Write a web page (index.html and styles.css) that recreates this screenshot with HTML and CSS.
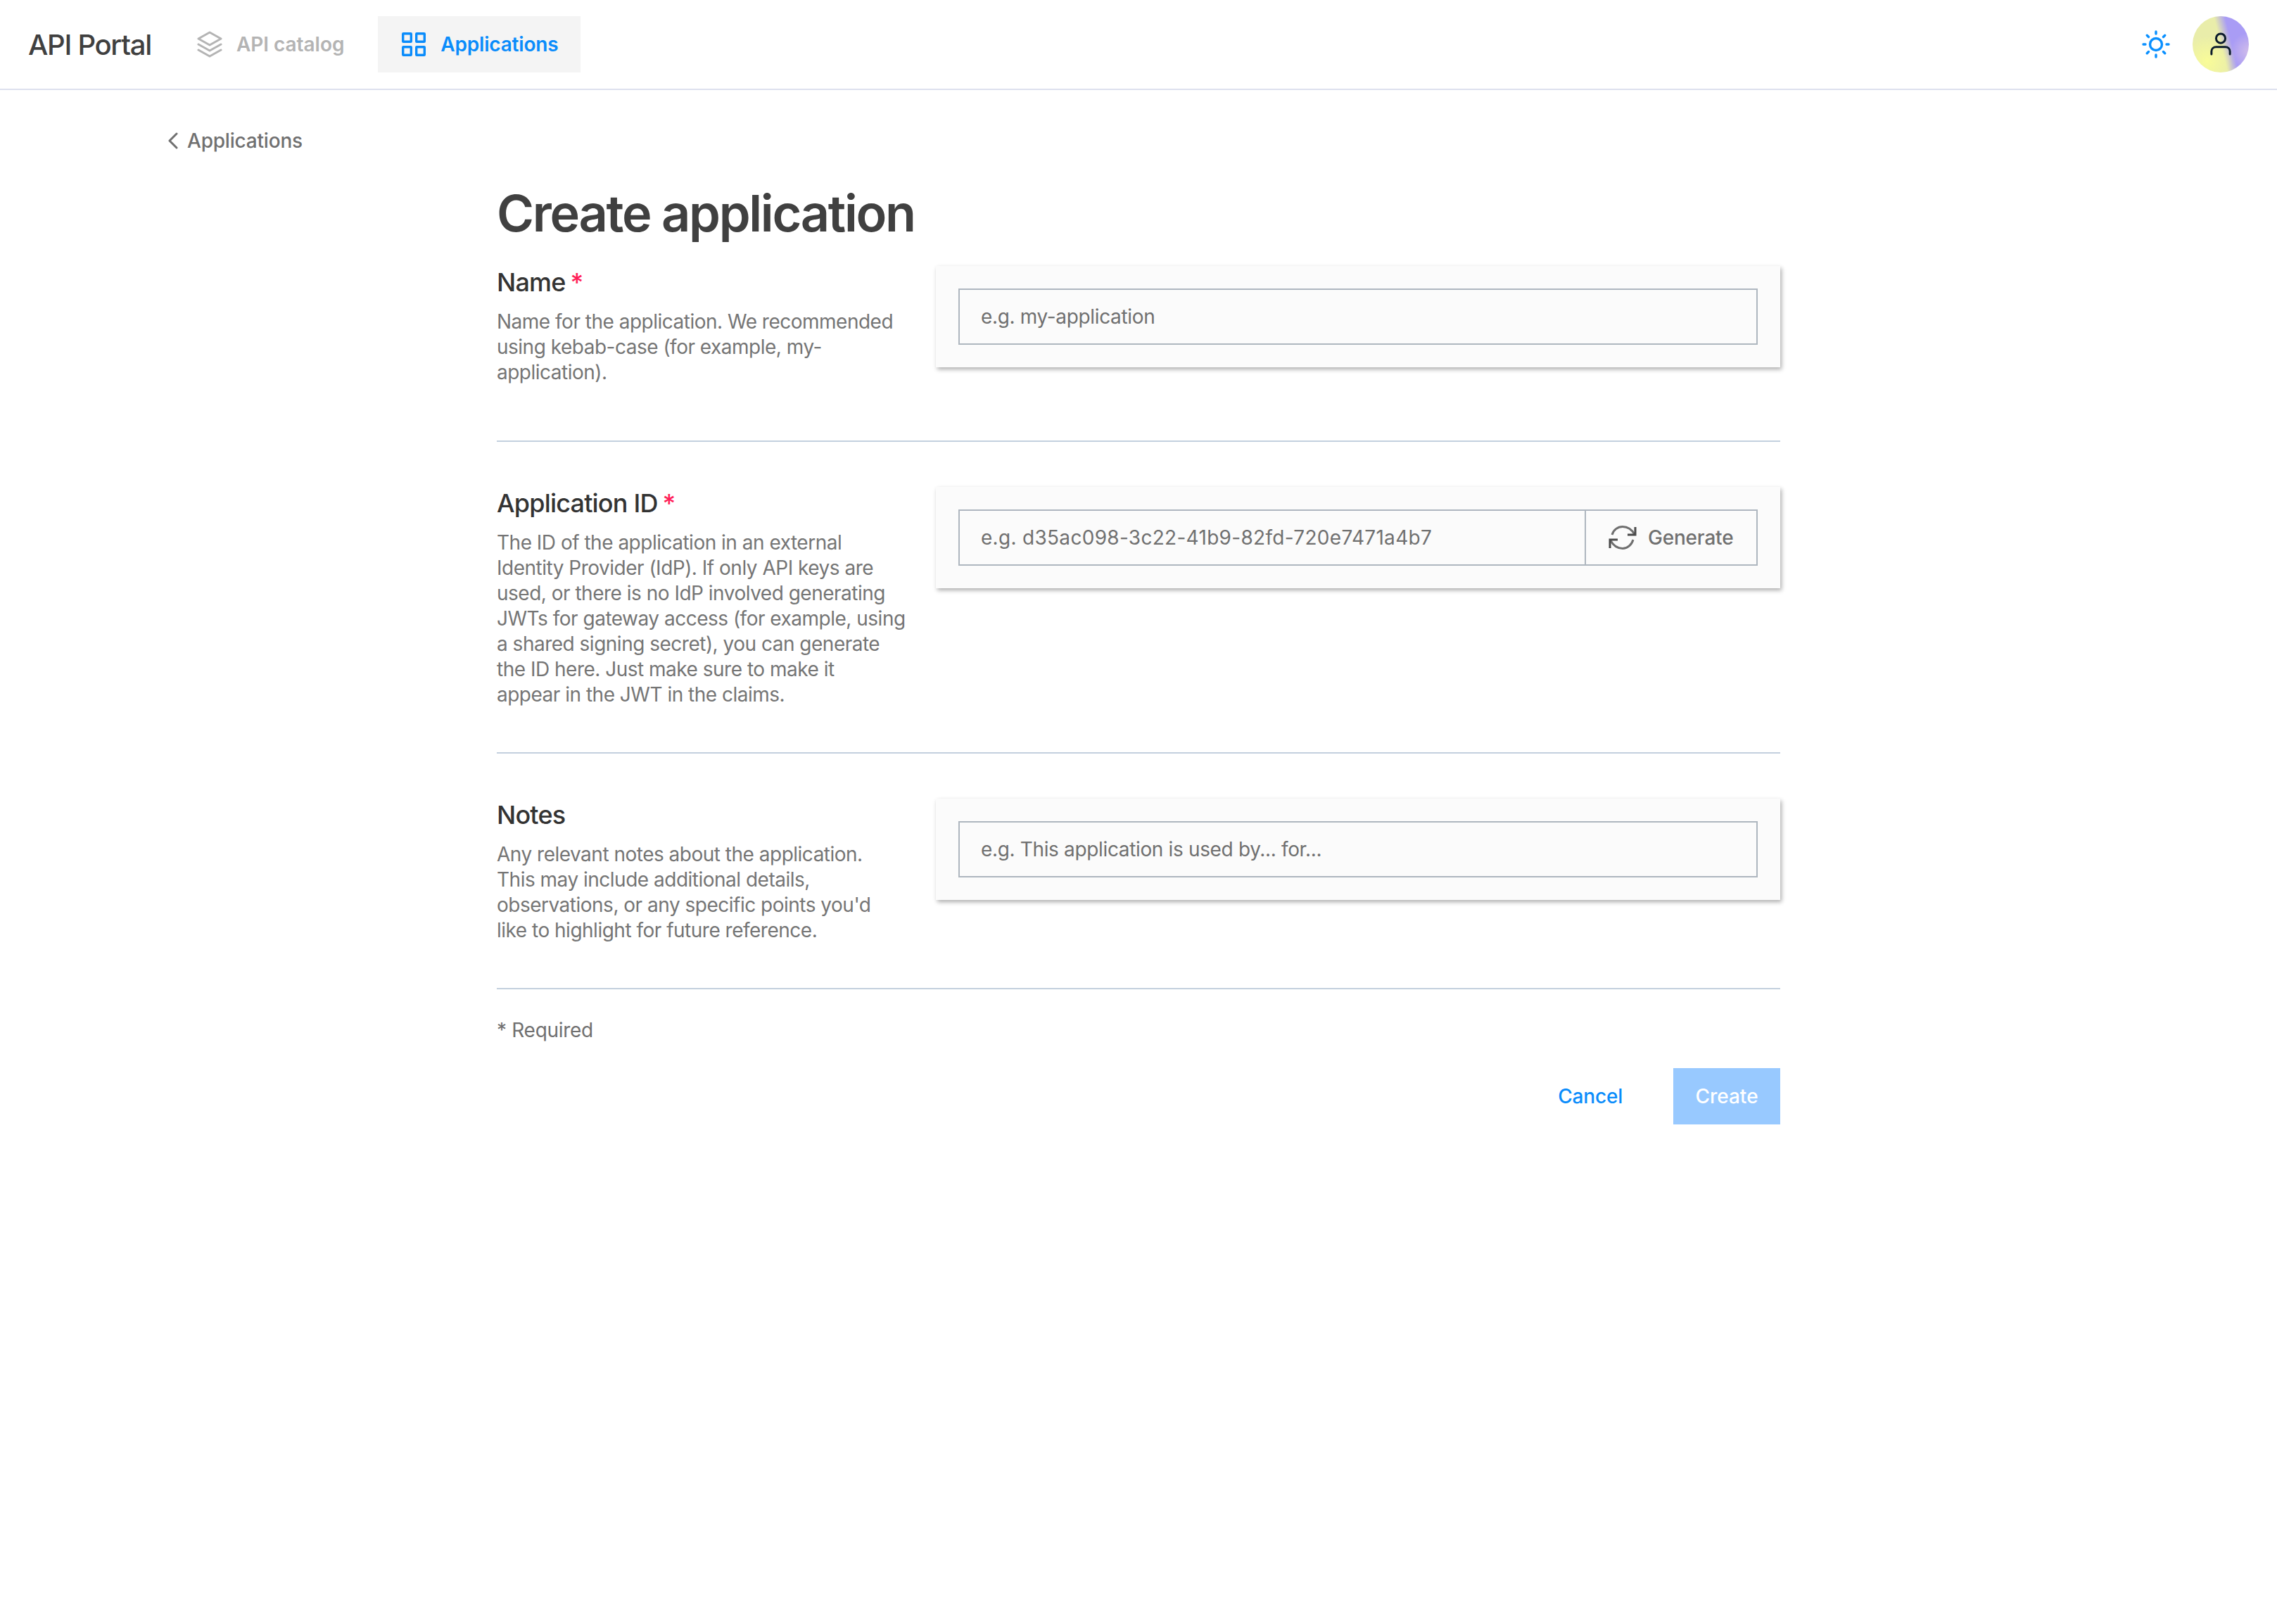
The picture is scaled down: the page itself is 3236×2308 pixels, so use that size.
FILE: index.html
```html
<!DOCTYPE html>
<html lang="en">
<head>
<meta charset="utf-8">
<title>Create application</title>
<link rel="stylesheet" href="styles.css">
</head>
<body>
<header class="topbar">
  <div class="brand">API Portal</div>
  <nav class="nav">
    <a class="nav-item nav-item--catalog">
      <svg class="nav-icon nav-icon--layers" viewBox="0 0 36 38" fill="none" stroke="currentColor" stroke-width="3" stroke-linejoin="round" stroke-linecap="round"><path d="M18 2 34 11 18 20 2 11Z"/><path d="M2 19 18 28 34 19"/><path d="M2 27 18 36 34 27"/></svg>
      <span>API catalog</span>
    </a>
    <a class="nav-item nav-item--active">
      <svg class="nav-icon nav-icon--grid" viewBox="0 0 34 34" fill="none" stroke="currentColor" stroke-width="3.400"><rect x="1.700" y="1.700" width="11.600" height="11.600" rx="0.500"/><rect x="20.700" y="1.700" width="11.600" height="11.600" rx="0.500"/><rect x="1.700" y="20.700" width="11.600" height="11.600" rx="0.500"/><rect x="20.700" y="20.700" width="11.600" height="11.600" rx="0.500"/></svg>
      <span>Applications</span>
    </a>
  </nav>
  <div class="topbar-right">
    <svg class="sun" viewBox="0 0 40 40" fill="none" stroke="#0a90ff" stroke-width="3.400" stroke-linecap="round"><circle cx="20" cy="20" r="8.500"/><path d="M20 2v3M20 35v3M2 20h3M35 20h3M7.300 7.300l2.200 2.200M30.500 30.500l2.200 2.200M7.300 32.700l2.200-2.200M30.500 9.500l2.200-2.200"/></svg>
    <div class="avatar">
      <svg class="avatar-icon" viewBox="0 0 32 36" fill="none" stroke="#0c1c2c" stroke-width="3.200" stroke-linecap="round"><circle cx="16" cy="9" r="7"/><path d="M2 33v-4c0-4 3-7 7-7h14c4 0 7 3 7 7v4"/></svg>
    </div>
  </div>
</header>

<a class="back">
  <svg class="back-icon" viewBox="0 0 14 24" fill="none" stroke="currentColor" stroke-width="3" stroke-linecap="round" stroke-linejoin="round"><path d="M12 2 2 12 12 22"/></svg>
  <span>Applications</span>
</a>

<main class="page">
  <h1 class="title">Create application</h1>

  <section class="row row--first">
    <div class="info">
      <h2 class="label">Name <span class="req">*</span></h2>
      <p class="desc">Name for the application. We recommended using kebab-case (for example, my-application).</p>
    </div>
    <div class="card">
      <div class="field"><span class="placeholder">e.g. my-application</span></div>
    </div>
  </section>

  <section class="row">
    <div class="info">
      <h2 class="label">Application ID <span class="req">*</span></h2>
      <p class="desc">The ID of the application in an external Identity Provider (IdP). If only API keys are used, or there is no IdP involved generating JWTs for gateway access (for example, using a shared signing secret), you can generate the ID here. Just make sure to make it<br>appear in the JWT in the claims.</p>
    </div>
    <div class="card">
      <div class="field">
        <span class="placeholder placeholder--id">e.g. d35ac098-3c22-41b9-82fd-720e7471a4b7</span>
        <div class="generate">
          <svg class="gen-icon" viewBox="0 0 40 34" fill="none" stroke="#6f6f6f" stroke-width="3"><path d="M5 13C7 6 13 1.500 20 1.500c7 0 13 4 17 11"/><path d="M35 20c-2 7-8 12.500-15 12.500-7 0-13-4-17-11"/><path d="M38 2v11H27" stroke="#4a4a4a"/><path d="M2 32V20h11" stroke="#4a4a4a"/></svg>
          <span>Generate</span>
        </div>
      </div>
    </div>
  </section>

  <section class="row">
    <div class="info">
      <h2 class="label">Notes</h2>
      <p class="desc">Any relevant notes about the application.<br>This may include additional details,<br>observations, or any specific points you'd<br>like to highlight for future reference.</p>
    </div>
    <div class="card">
      <div class="field"><span class="placeholder">e.g. This application is used by... for...</span></div>
    </div>
  </section>

  <p class="required-note">* Required</p>

  <div class="actions">
    <a class="btn-cancel">Cancel</a>
    <a class="btn-create">Create</a>
  </div>
</main>
</body>
</html>
```

FILE: styles.css
```css
* { box-sizing: border-box; }
html, body { margin: 0; padding: 0; background: #fff; }
body { font-family: Inter, "Liberation Sans", sans-serif; font-size: 28px; color: #404040; height: 2308px; overflow: hidden; }

.topbar { display: flex; align-items: center; height: 128px; padding: 0 40px; border-bottom: 2px solid #dde0ee; }
.brand { font-size: 40px; font-weight: 500; letter-spacing: -1.3px; color: #404040; margin-right: 64px; width: 176px; white-space: nowrap; }
.nav { display: flex; gap: 16px; }
.nav-item { display: flex; align-items: center; height: 80px; font-size: 28px; font-weight: 600; color: #b4b4b4; }
.nav-item--catalog { padding-right: 32px; letter-spacing: -0.05px; }
.nav-item--active { width: 288px; padding-left: 34px; background: #f4f4f4; color: #0a8cfb; letter-spacing: -0.2px; }
.nav-icon { flex: none; }
.nav-icon--layers { width: 36px; height: 38px; margin-right: 20px; }
.nav-icon--grid { width: 34px; height: 34px; margin-right: 21px; }
.topbar-right { margin-left: auto; display: flex; align-items: center; gap: 32px; }
.sun { width: 40px; height: 40px; }
.avatar { width: 80px; height: 80px; border-radius: 50%; display: flex; align-items: center; justify-content: center; background: radial-gradient(circle at 100% 62%, #d0bcea 0, rgba(208,188,234,0) 26px), radial-gradient(circle at 26% 80%, #f9fc98 0, rgba(249,252,152,0) 36px), linear-gradient(76deg, #e9edaa 50%, #a99cf5 66%); }
.avatar-icon { width: 30px; height: 34px; }

.back { display: flex; align-items: center; margin: 54px 0 0 239px; height: 36px; font-size: 28px; font-weight: 500; letter-spacing: -0.2px; color: #707070; }
.back-icon { width: 14px; height: 24px; margin-right: 13px; }

.page { width: 1824px; margin: 0 0 0 706px; }
.title { margin: 33px 0 0; font-size: 72px; line-height: 104px; font-weight: 600; letter-spacing: -2.3px; color: #404040; height: 127px; }

.row { display: flex; gap: 32px; padding-bottom: 64px; margin-bottom: 64px; border-bottom: 2px solid #c3d0de; }
.row--first { padding-bottom: 79px; }
.info { width: 592px; flex: none; }
.label { margin: 0; padding-top: 1px; font-size: 36px; line-height: 44px; font-weight: 500; letter-spacing: -0.8px; color: #333; height: 61px; }
.req { margin-left: -2px; color: #ff1f5a; }
.desc { margin: 0; font-size: 28px; line-height: 36px; letter-spacing: -0.5px; color: #757575; }

.card { flex: 1; align-self: flex-start; padding: 32px; background: #fbfbfb; box-shadow: 2px 3px 6px rgba(0,0,0,0.32); }
.field { display: flex; align-items: stretch; height: 80px; border: 2px solid #aeb6bf; }
.placeholder { flex: 1; align-self: center; padding-left: 30px; font-size: 28px; letter-spacing: -0.35px; color: #707070; }
.placeholder--id { letter-spacing: 0.3px; }
.generate { display: flex; align-items: center; width: 244px; flex: none; padding-left: 32px; border-left: 2px solid #aeb6bf; font-weight: 500; letter-spacing: -0.2px; color: #707070; }
.gen-icon { width: 40px; height: 34px; margin-right: 16px; }

.required-note { margin: -24px 0 0; line-height: 36px; letter-spacing: -0.3px; color: #707070; }
.actions { display: flex; justify-content: flex-end; align-items: center; margin-top: 36px; }
.btn-cancel { font-weight: 500; letter-spacing: -0.2px; color: #0a8cfb; margin-right: 72px; }
.btn-create { display: flex; align-items: center; justify-content: center; width: 152px; height: 80px; background: #98c9ff; color: #fff; font-weight: 500; }
```
